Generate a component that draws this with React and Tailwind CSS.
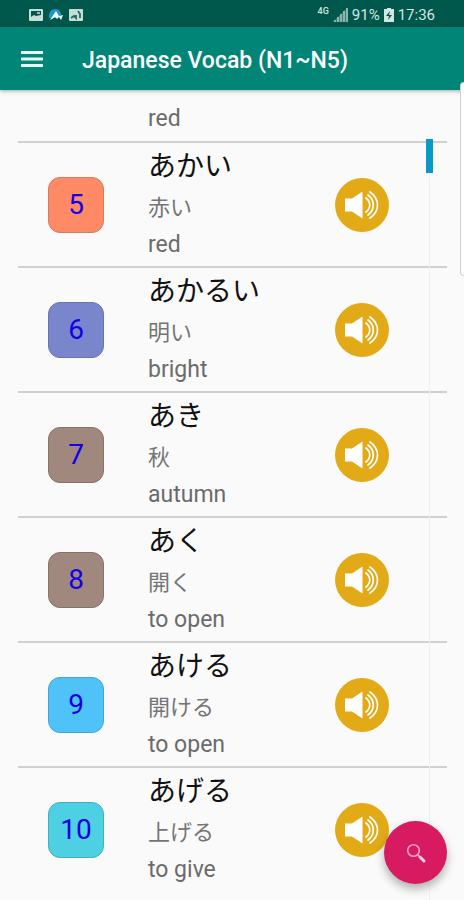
import clsx from 'clsx'

const words = [
  { number: 5, kana: 'あかい', kanji: '赤い', meaning: 'red', tile: 'border-[#d67b5e] bg-[#ff8a65]' },
  { number: 6, kana: 'あかるい', kanji: '明い', meaning: 'bright', tile: 'border-[#6673b0] bg-[#7986cb]' },
  { number: 7, kana: 'あき', kanji: '秋', meaning: 'autumn', tile: 'border-[#8a7168] bg-[#a1887f]' },
  { number: 8, kana: 'あく', kanji: '開く', meaning: 'to open', tile: 'border-[#8a7168] bg-[#a1887f]' },
  { number: 9, kana: 'あける', kanji: '開ける', meaning: 'to open', tile: 'border-[#45a5d2] bg-[#4fc3f7]' },
  { number: 10, kana: 'あげる', kanji: '上げる', meaning: 'to give', tile: 'border-[#42b0bf] bg-[#4dd0e1]' },
]

function StatusBar() {
  return (
    <div className="flex h-[27px] shrink-0 items-center justify-between bg-[#00574b] pt-0.5 pr-[29px] pl-7 text-[#d5e5e2]">
      <div className="flex items-center gap-1">
        <svg viewBox="0 0 16 14" className="h-[14px] w-4" aria-hidden="true">
          <rect x="1" y="1" width="14" height="12" rx="1" fill="#c5dfd8" />
          <rect x="3" y="3" width="10" height="8" fill="#00574b" />
          <path d="M3 11V9l3-2 2 1 5-1v4Z" fill="#c5dfd8" />
          <path d="M9 4h3v2H9Z" fill="#94bcb2" />
        </svg>
        <svg viewBox="0 0 16 14" className="h-[14px] w-4" aria-hidden="true">
          <path d="M1 10C0 5 3 1 7 1s6 3 6 6l-3 3Z" fill="#2196c9" />
          <path d="m2 12 6-9 3 5 4-1-2 5-2-3-2 2-2-2-3 2Z" fill="#f4ffff" />
        </svg>
        <svg viewBox="0 0 16 14" className="h-[14px] w-4" aria-hidden="true">
          <rect x="1" y="1" width="14" height="12" rx="1" fill="#c5dfd8" />
          <path d="m3 10 3-2 2 2V7m2-4 2 3v4" fill="none" stroke="#28685b" strokeWidth="1.8" />
        </svg>
      </div>
      <div className="flex items-center text-[15px] leading-5">
        <span className="mb-[7px] text-[9px] leading-3 font-medium">4G</span>
        <svg viewBox="0 0 15 14" className="ml-1 h-[14px] w-[15px]" fill="#8bb3ab" aria-hidden="true">
          <path d="M0 14 14 0v14Z" opacity="0.45" />
          <path d="M1 12h2v2H1zM4 9h2v5H4zM7 6h2v8H7zM10 3h2v11h-2zM13 0h2v14h-2z" />
        </svg>
        <span className="ml-1">91%</span>
        <svg viewBox="0 0 10 14" className="mx-1 h-[14px] w-[10px]" aria-hidden="true">
          <path d="M3 0h4v1h3v13H0V1h3Z" fill="#d5e5e2" />
          <path d="M6 3 2 8h3l-1 4 4-5H5Z" fill="#00574b" />
        </svg>
        <span>17:36</span>
      </div>
    </div>
  )
}

function SpeakerIcon() {
  return (
    <svg viewBox="0 0 54 54" className="h-[54px] w-[54px]" aria-hidden="true">
      <circle cx="27" cy="27" r="27" fill="#e2aa17" />
      <path d="M10 20.5h7l10.5-7v27l-10.5-7h-7Z" fill="#fff" />
      <g fill="none" stroke="#fff" strokeWidth="1.7" strokeLinecap="round">
        <path d="M31 20c5 4 5 10 0 14" />
        <path d="M33 17c7 5 7 15 0 20" />
        <path d="M35 14c10 7 10 19 0 26" />
      </g>
    </svg>
  )
}

function WordRow({ number, kana, kanji, meaning, tile }) {
  return (
    <li className="flex h-[125px] items-center border-t-2 border-[#d0d0d0] pl-[30px]">
      <div className={clsx('flex h-14 w-14 shrink-0 items-center justify-center rounded-xl border text-[28px] leading-8 text-[#1400e6]', tile)}>
        {number}
      </div>
      <div className="ml-11 min-w-0 flex-1" lang="ja">
        <p className="text-[28px] leading-[42px] text-[#111111]">{kana}</p>
        <p className="text-[22px] leading-[39px] text-[#757575]">{kanji}</p>
        <p className="text-[23px] leading-9 text-[#6b6b6b]">{meaning}</p>
      </div>
      <button type="button" aria-label={`Play ${kana}`} className="mr-[58px] shrink-0 rounded-full">
        <SpeakerIcon />
      </button>
    </li>
  )
}

export default function App() {
  return (
    <div className="relative flex h-dvh flex-col overflow-hidden bg-[#fafafa] font-[Roboto,'Noto_Sans_CJK_JP',sans-serif]">
      <StatusBar />
      <header className="z-10 flex h-[63px] shrink-0 items-center bg-[#008577] pl-[21px] text-white shadow-[0_1px_4px_rgba(0,0,0,0.35)]">
        <button type="button" aria-label="Open menu">
          <svg viewBox="0 0 22 16" className="h-4 w-[22px]" fill="#e9f8f5" aria-hidden="true">
            <path d="M0 0h22v3H0zM0 6.5h22v3H0zM0 13h22v3H0z" />
          </svg>
        </button>
        <h1 className="ml-[39px] pt-1 text-[23px] leading-8 font-medium">Japanese Vocab (N1~N5)</h1>
      </header>

      <main className="relative min-h-0 flex-1 overflow-hidden pr-[17px] pl-[18px]">
        <ul>
          <li className="flex h-[51px] items-end pb-1 pl-[130px]">
            <p className="text-[23px] leading-9 text-[#6b6b6b]">red</p>
          </li>
          {words.map((word) => (
            <WordRow key={word.number} {...word} />
          ))}
        </ul>
        <div className="absolute top-[49px] right-[31px] bottom-0 flex w-[7px] justify-center" aria-hidden="true">
          <div className="h-full w-px bg-[#f0f0f0]" />
          <div className="absolute top-0 h-[34px] w-full bg-[#0799c8]" />
        </div>
      </main>

      <div className="absolute top-[82px] right-0 z-20 h-[194px] w-1 rounded-l-md border-y border-l border-[#d0d0d0] bg-white" aria-hidden="true" />

      <button
        type="button"
        aria-label="Search"
        className="absolute right-[17px] bottom-4 z-20 flex h-[63px] w-[63px] items-center justify-center rounded-full bg-[#d81b60] shadow-[0_5px_10px_rgba(0,0,0,0.3)]"
      >
        <svg viewBox="0 0 20 20" className="h-5 w-5" fill="none" aria-hidden="true">
          <circle cx="7.5" cy="7.5" r="5.8" stroke="#f0a5c0" strokeWidth="1.6" />
          <path d="m12 12 2 2" stroke="#f0a5c0" strokeWidth="1.6" />
          <path d="m14 14 4 4" stroke="#f9cfdf" strokeWidth="3" strokeLinecap="round" />
        </svg>
      </button>
    </div>
  )
}
